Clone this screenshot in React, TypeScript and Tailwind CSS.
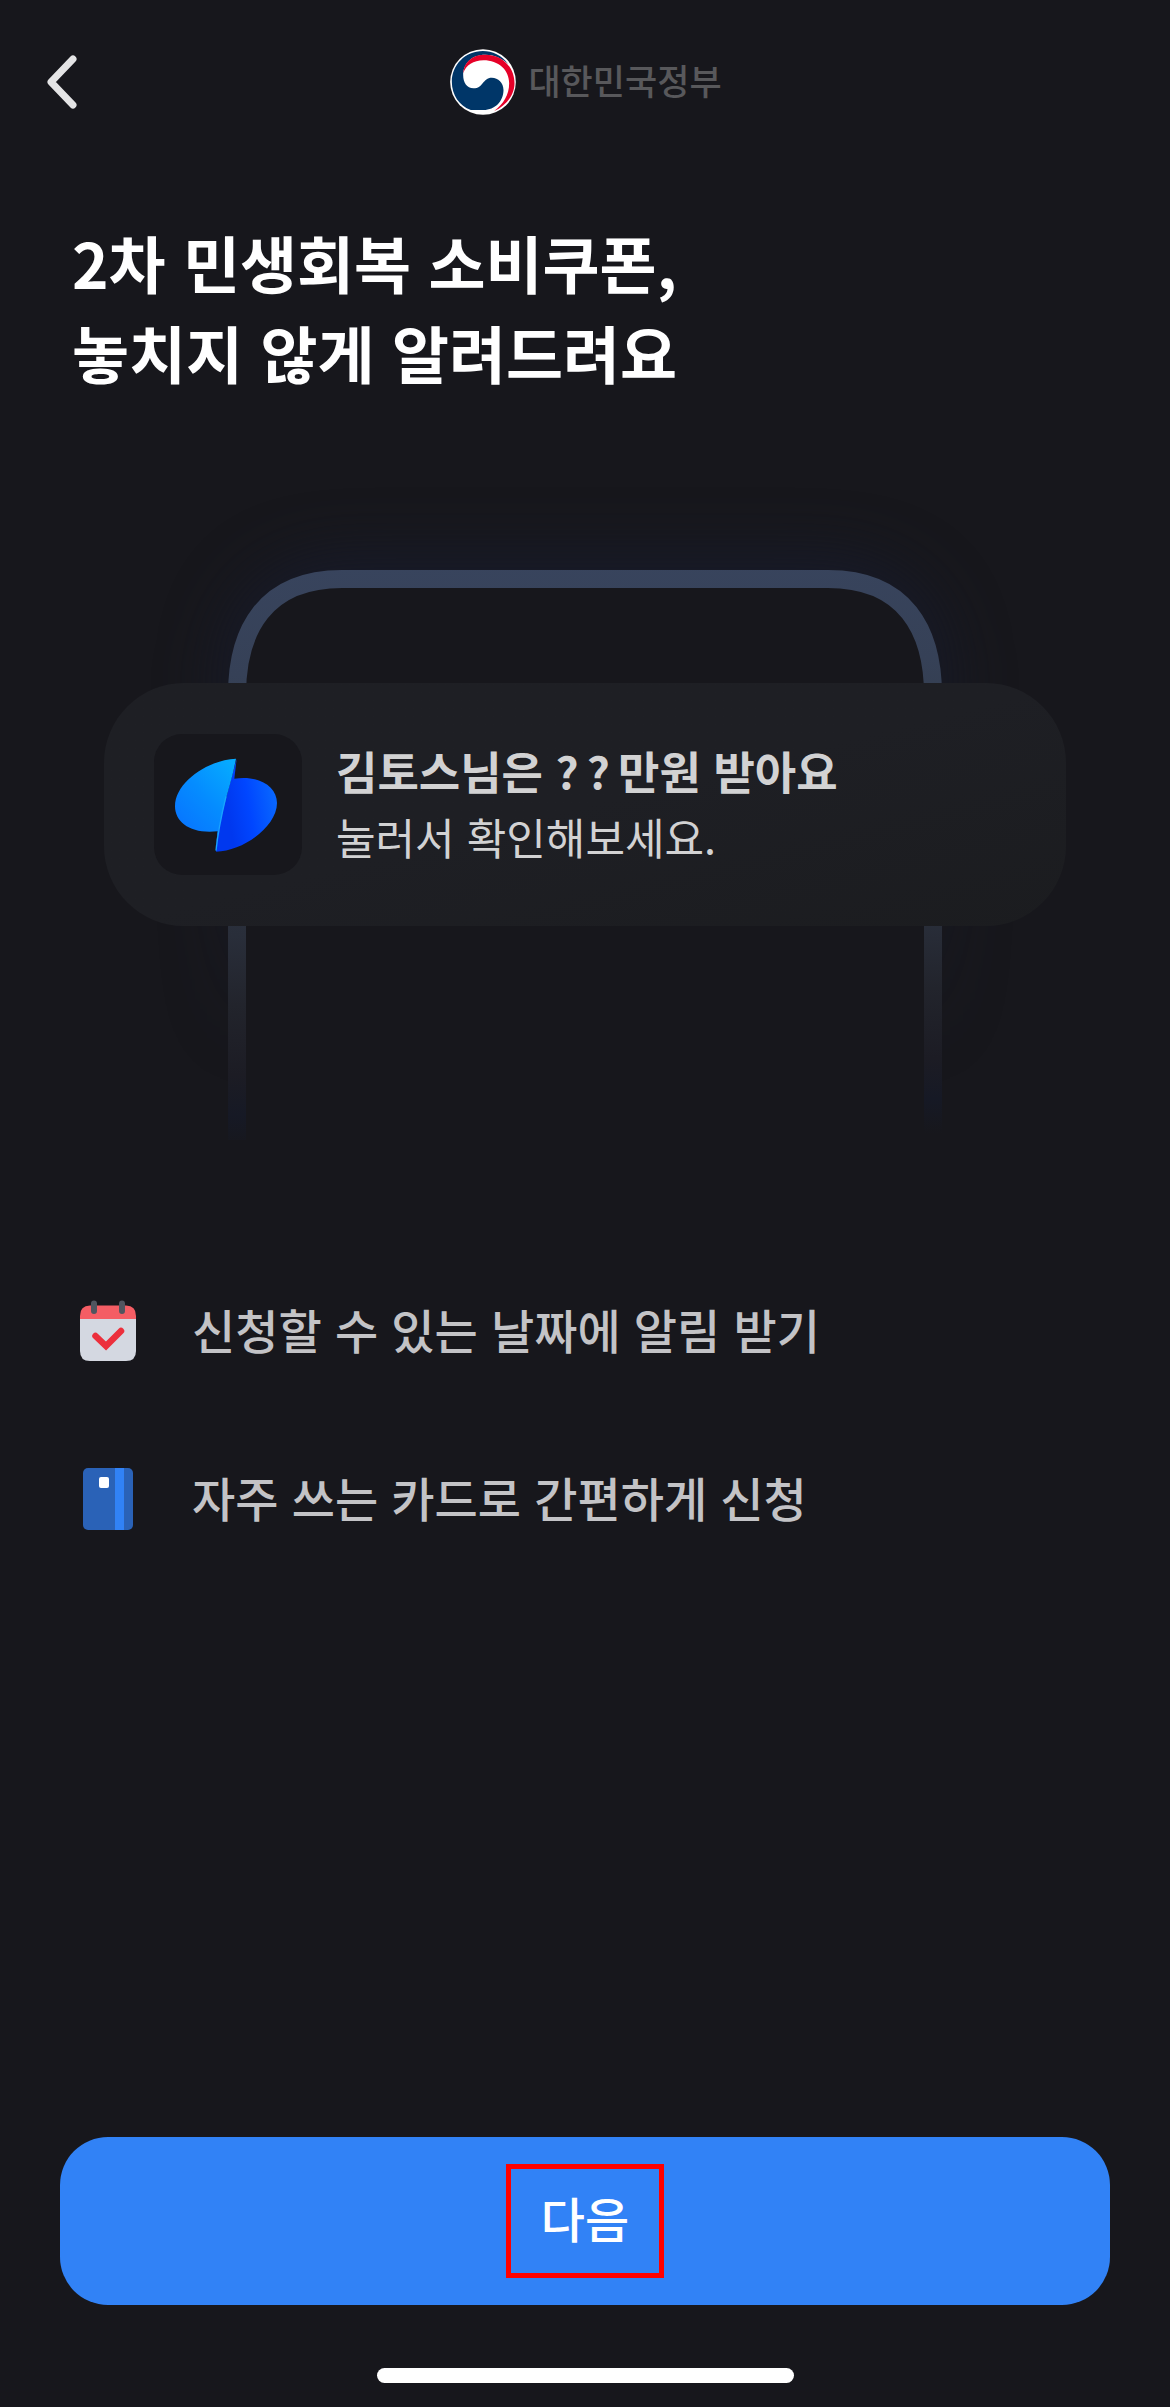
import type { ReactNode } from "react";

function BackIcon() {
  return (
    <svg viewBox="0 0 32 56" className="h-14 w-8" fill="none" aria-hidden="true">
      <path d="M27 5 L5 28 L27 51" stroke="#e4e4e5" strokeWidth="7" strokeLinecap="round" strokeLinejoin="round" />
    </svg>
  );
}

function GovernmentEmblem() {
  return (
    <svg viewBox="90 87 197 198" className="size-[66px]" aria-hidden="true">
      <circle cx="188.500" cy="186" r="98.500" fill="#fff" />
      <path
        fill="#003668"
        d="M265 133 C244 105 217 93 188 93 C135 93 95 135 95 186 C95 225 118 258 152 270 H190 C225 270 250 243 250 210 C250 188 234 173 215 173 C187 173 190 205 160 205 C140 205 129 187 129 165 C129 130 155 104 195 104 C225 104 250 118 265 133Z"
      />
      <path
        fill="#e60028"
        d="M129 160 C131 127 155 104 195 104 C250 104 283 145 283 190 C283 228 255 258 222 273 C250 252 267 225 267 190 C267 150 235 121 190 121 C160 121 137 136 129 160Z"
      />
    </svg>
  );
}

function PhoneOutline() {
  return (
    <svg
      viewBox="0 0 962 650"
      className="col-start-1 row-start-1 h-[650px] w-full overflow-visible"
      preserveAspectRatio="xMidYMin meet"
      fill="none"
      aria-hidden="true"
    >
      <defs>
        <linearGradient id="edge" gradientUnits="userSpaceOnUse" x1="133" y1="80" x2="147" y2="660">
          <stop offset="0" stopColor="#38445d" />
          <stop offset="0.18" stopColor="#364157" />
          <stop offset="0.35" stopColor="#323b4a" />
          <stop offset="0.63" stopColor="#292e3a" />
          <stop offset="0.75" stopColor="#22242c" />
          <stop offset="0.87" stopColor="#1c1c24" />
          <stop offset="0.94" stopColor="#161925" />
          <stop offset="1" stopColor="#17171c" />
        </linearGradient>
        <linearGradient id="halo" gradientUnits="userSpaceOnUse" x1="0" y1="80" x2="0" y2="560">
          <stop offset="0" stopColor="#171b2e" />
          <stop offset="1" stopColor="#171b2e" stopOpacity="0" />
        </linearGradient>
        <filter id="soft" x="-25%" y="-30%" width="150%" height="160%" colorInterpolationFilters="sRGB">
          <feGaussianBlur stdDeviation="30" />
        </filter>
      </defs>
      <path
        d="M116 560 V198 C116 115 165 68 248 68 H714 C797 68 846 115 846 198 V560Z"
        fill="url(#halo)"
        fillOpacity="0.8"
        filter="url(#soft)"
      />
      <path d="M133 650 V205 C133 140 161 89 238 89 H724 C801 89 829 140 829 205 V650Z" fill="#17171c" />
      <path
        d="M133 650 V205 C133 140 161 89 238 89 H724 C801 89 829 140 829 205 V650"
        stroke="url(#edge)"
        strokeWidth="18"
      />
    </svg>
  );
}

function AppLogo() {
  return (
    <svg viewBox="255 260 306 282" className="h-[94px] w-[102px]" aria-hidden="true">
      <defs>
        <linearGradient id="leafLeft" x1="1" y1="0.1" x2="0.35" y2="1">
          <stop offset="0" stopColor="#06abff" />
          <stop offset="0.5" stopColor="#058cff" />
          <stop offset="1" stopColor="#0873ff" />
        </linearGradient>
        <linearGradient id="leafRight" x1="0.15" y1="0.4" x2="0.9" y2="0.2">
          <stop offset="0" stopColor="#0038ef" />
          <stop offset="0.45" stopColor="#0046ff" />
          <stop offset="1" stopColor="#0866ff" />
        </linearGradient>
      </defs>
      <path
        fill="url(#leafRight)"
        d="M440 262 L433 322 C505 310 561 345 561 395 C561 465 460 540 378 541 L384 470 Z"
      />
      <path
        fill="url(#leafLeft)"
        d="M438 262 C360 264 255 330 255 405 C255 455 305 489 383 480 L376 536 C384 480 396 425 410 375 C420 338 430 305 438 262Z"
      />
      <path stroke="#19a4ff" strokeWidth="4" fill="none" d="M378 538 C385 470 396 425 408 375" />
    </svg>
  );
}

function CalendarIcon() {
  return (
    <svg viewBox="0 0 56 62" className="h-[62px] w-14" aria-hidden="true">
      <path d="M0 18 H56 V51 Q56 61 46 61 H10 Q0 61 0 51Z" fill="#d4d8e1" />
      <path d="M0 19 V16 Q0 5.500 10 5.500 H46 Q56 5.500 56 16 V19Z" fill="#f45d64" />
      <path d="M14 3.500 V11 M42 3.500 V11" stroke="#50555f" strokeWidth="6" strokeLinecap="round" />
      <path
        d="M15.500 36 L26 46 L41 31"
        fill="none"
        stroke="#ec2f3c"
        strokeWidth="6.500"
        strokeLinecap="round"
        strokeLinejoin="miter"
      />
    </svg>
  );
}

function CardIcon() {
  return (
    <svg viewBox="0 0 50 62" className="h-[62px] w-[50px]" aria-hidden="true">
      <rect width="50" height="62" rx="5" fill="#2a62b7" />
      <path d="M32 0 H41 V62 H32Z" fill="#3182f6" />
      <rect x="16" y="9" width="10" height="11" rx="2" fill="#fff" />
    </svg>
  );
}

function Feature({ icon, children }: { icon: ReactNode; children: ReactNode }) {
  return (
    <li className="flex h-18 items-center gap-14">
      <span className="flex w-14 shrink-0 justify-center">{icon}</span>
      <span className="pb-1 text-[47px] leading-[72px] font-medium text-[#c3c3c6]">{children}</span>
    </li>
  );
}

export default function App() {
  return (
    <div
      lang="ko"
      className="flex min-h-screen flex-col bg-[#17171c] font-['Noto_Sans_CJK_KR',sans-serif] text-white"
    >
      <header className="grid h-[164px] grid-cols-[1fr_auto_1fr] items-center px-[46px]">
        <button type="button" aria-label="뒤로" className="justify-self-start">
          <BackIcon />
        </button>
        <div className="flex items-center gap-3 pl-0.5">
          <GovernmentEmblem />
          <span className="pb-1 text-[35px] leading-[52px] font-medium text-[#58585b]">대한민국정부</span>
        </div>
      </header>

      <main>
        <h1 className="mt-[53px] px-[72px] text-[62px] leading-[90px] font-bold">
          2차 민생회복 소비쿠폰,
          <br />
          놓치지 않게 알려드려요
        </h1>

        <section className="mx-[104px] mt-[93px] grid">
          <PhoneOutline />
          <div className="col-start-1 row-start-1 mt-[193px] flex h-[243px] items-center gap-[34px] self-start rounded-[80px] bg-linear-to-br from-[#1e1f24] from-50% to-[#1b1c1f] px-[50px]">
            <div className="flex h-[141px] w-[148px] shrink-0 items-center justify-center rounded-[28px] bg-[#17171c] pr-1">
              <AppLogo />
            </div>
            <div className="pb-1 text-[#d2d2d3]">
              <p className="text-[45px] leading-[66px] font-bold">
                김토스님은 <span className="mr-2">?</span>
                <span className="mr-2">?</span>만원 받아요
              </p>
              <p className="text-[43px] leading-[64px]">눌러서 확인해보세요.</p>
            </div>
          </div>
        </section>

        <ul className="mt-[155px] flex flex-col gap-24 px-20">
          <Feature icon={<CalendarIcon />}>신청할 수 있는 날짜에 알림 받기</Feature>
          <Feature icon={<CardIcon />}>자주 쓰는 카드로 간편하게 신청</Feature>
        </ul>
      </main>

      <footer className="mt-auto flex flex-col items-center px-15 pb-6">
        <button type="button" className="flex h-42 w-full items-center justify-center rounded-[48px] bg-[#3182f6]">
          <span className="border-5 border-[#ff0000] px-[30px] pt-3 pb-5 text-5xl leading-[72px] font-medium">
            다음
          </span>
        </button>
        <div className="mt-[63px] h-[15px] w-[417px] rounded-full bg-white" />
      </footer>
    </div>
  );
}
